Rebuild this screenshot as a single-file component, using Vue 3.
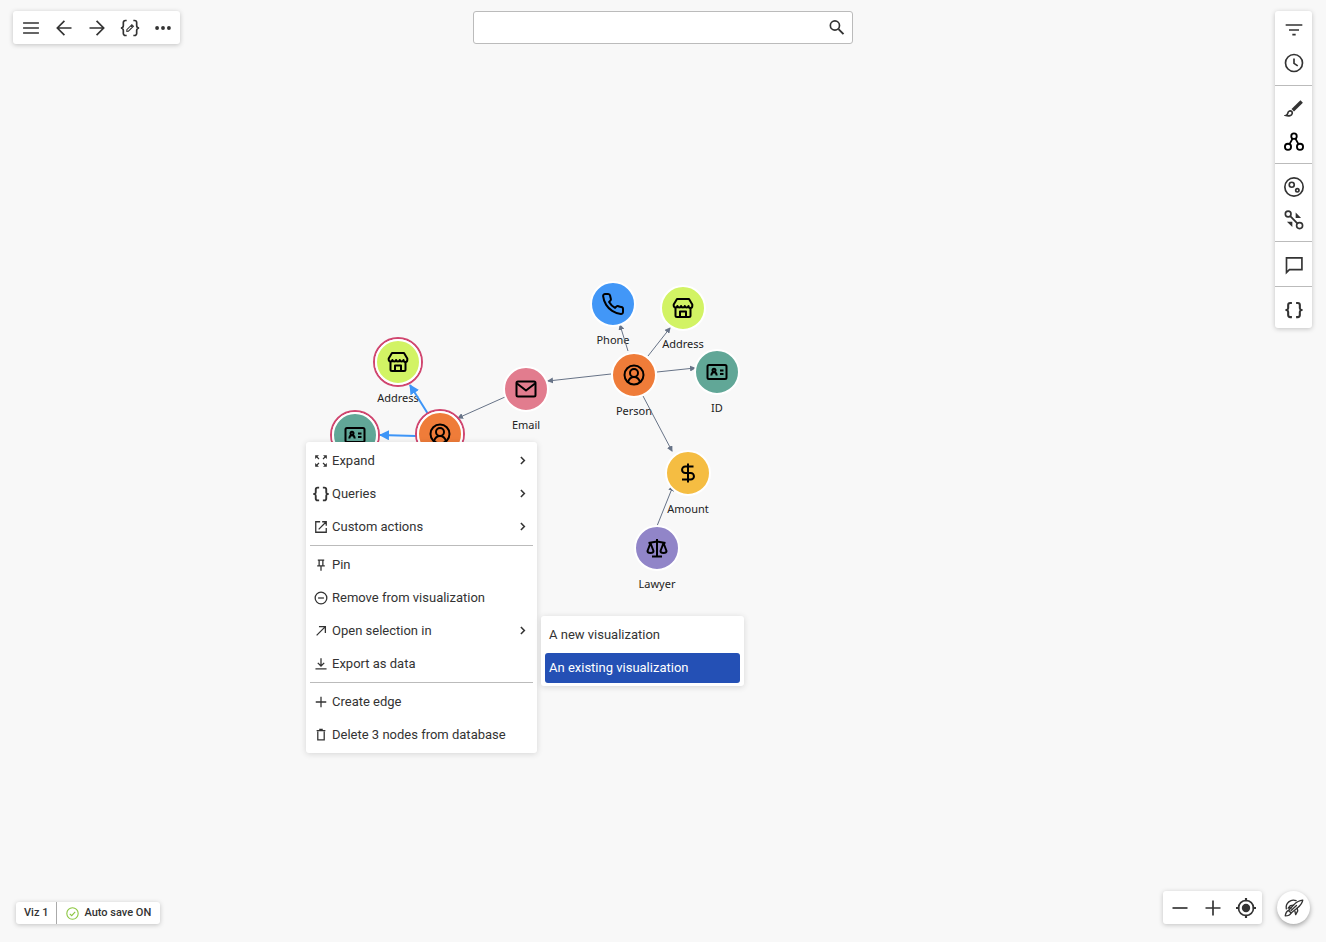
<template>
  <div class="app">
    <!-- icon sprite -->
    <svg class="sprite" aria-hidden="true">
      <symbol id="i-menu" viewBox="0 0 24 24"><path d="M2.500 6h19M2.500 12h19M2.500 18h19" /></symbol>
      <symbol id="i-back" viewBox="0 0 24 24"><path d="M21 12H4.500M12.500 3.500L4 12l8.500 8.500" /></symbol>
      <symbol id="i-forward" viewBox="0 0 24 24"><path d="M3 12h16.500M11.500 3.500L20 12l-8.500 8.500" /></symbol>
      <symbol id="i-query-edit" viewBox="0 0 24 24">
        <path d="M8 3H6.500a2.500 2.500 0 0 0-2.500 2.500v3.500A3 3 0 0 1 1 12a3 3 0 0 1 3 3v3.500A2.500 2.500 0 0 0 6.500 21H8M16 3h1.500a2.500 2.500 0 0 1 2.500 2.500v3.500A3 3 0 0 0 23 12a3 3 0 0 0-3 3v3.500a2.500 2.500 0 0 1-2.500 2.500H16" />
        <path stroke-width="1.300" d="M8.200 16v-2l6-6 1.900 1.900-6 6zM13 9.300l1.800 1.800" />
      </symbol>
      <symbol id="i-more" viewBox="0 0 24 24"><path fill="currentColor" stroke="none" d="M2.600 12a2.300 2.300 0 1 0 4.600 0 2.300 2.300 0 1 0-4.600 0M9.700 12a2.300 2.300 0 1 0 4.600 0 2.300 2.300 0 1 0-4.600 0M16.800 12a2.300 2.300 0 1 0 4.600 0 2.300 2.300 0 1 0-4.600 0" /></symbol>
      <symbol id="i-search" viewBox="0 0 24 24"><circle cx="9.500" cy="9" r="5.500" /><path stroke-width="2.400" d="M13.800 13.300l6 6" /></symbol>
      <symbol id="i-filter" viewBox="0 0 24 24"><path d="M2 6h20M6 12h12M10 17.500h4" /></symbol>
      <symbol id="i-clock" viewBox="0 0 24 24"><circle cx="12" cy="12" r="10.200" /><path d="M12 6.500v6l4.500 3" /></symbol>
      <symbol id="i-brush" viewBox="0 0 24 24">
        <path stroke-width="4.200" d="M10.500 13.500L21.200 3" />
        <path stroke-width="2" d="M8.500 14.500c-2-.6-3.700.6-3.900 2.400-.2 1.500-.8 2.400-2.300 2.900 3.600 1.100 6.900.1 7.500-2.300.3-1.300-.2-2.500-1.300-3z" />
      </symbol>
      <symbol id="i-nodes" viewBox="0 0 24 24">
        <g stroke="#000" stroke-width="2.200"><circle cx="12" cy="5" r="3.300" /><circle cx="4.800" cy="17.800" r="3.700" /><circle cx="19.200" cy="17.800" r="3.700" /><path d="M10.300 8l-3.700 6.500M13.700 8l3.700 6.500" /></g>
      </symbol>
      <symbol id="i-node-style" viewBox="0 0 24 24"><circle cx="12" cy="12" r="11" /><circle cx="9.300" cy="9.300" r="3" /><circle cx="16" cy="16" r="2" /></symbol>
      <symbol id="i-edge-style" viewBox="0 0 24 24">
        <circle cx="5" cy="4.800" r="3.400" /><circle cx="18.700" cy="18.700" r="3.600" /><path stroke-width="2.200" d="M7.500 7.300l8.500 8.700" />
        <path fill="currentColor" stroke="none" d="M14 3l6.500 6.500H14zM3.500 14H10v6.500z" />
      </symbol>
      <symbol id="i-comment" viewBox="0 0 24 24"><path d="M3 21V3.500h18.500v14H6.500z" /></symbol>
      <symbol id="i-braces" viewBox="0 0 24 24"><path stroke-width="2.500" d="M9.500 3.500H7.500A2.500 2.500 0 0 0 5 6v3.500A2.500 2.500 0 0 1 2 12a2.500 2.500 0 0 1 3 2.500V18a2.500 2.500 0 0 0 2.500 2.500h2M14.500 3.500h2A2.500 2.500 0 0 1 19 6v3.500A2.500 2.500 0 0 0 22 12a2.500 2.500 0 0 0-3 2.500V18a2.500 2.500 0 0 1-2.500 2.500h-2" /></symbol>
      <symbol id="i-minus" viewBox="0 0 24 24"><path d="M3 12h18" /></symbol>
      <symbol id="i-plus" viewBox="0 0 24 24"><path d="M3 12h18M12 3v18" /></symbol>
      <symbol id="i-target" viewBox="0 0 24 24"><circle cx="12" cy="12" r="9" /><circle cx="12" cy="12" r="5" fill="currentColor" stroke="none" /><path stroke-width="2.600" d="M12 0v4M12 20v4M0 12h4M20 12h4" /></symbol>
      <symbol id="i-rocket" viewBox="0 0 24 24">
        <g stroke-width="1.600" stroke-linejoin="round" stroke-linecap="round">
          <path d="M22.500 2.500c-4 .3-7 1.700-10.500 5.500L5.500 15l3 3 7.500-6c4-3.300 6-6 6.500-9.500z" />
          <path d="M11.500 8.500L7.500 9.300 5 12.200l3.500-.2M15.800 12.300l.7 3.200-2.500 4.500-1-4.500" />
          <path d="M5.500 15C3 15.800 2 18 1.500 21.500c3.500 0 5.800-1 7-3.500" />
          <path d="M2.800 13C1.500 6.500 8 .5 14.500 3.200" />
          <path d="M15 9l-6.500 6" />
        </g>
      </symbol>
      <symbol id="i-check" viewBox="0 0 24 24"><circle cx="12" cy="12" r="10.500" /><path d="M7 12.500l3.500 3.500 6.500-7" /></symbol>
      <symbol id="i-chevron" viewBox="0 0 24 24"><path stroke-width="3.400" d="M8.500 4.500L16 12l-7.500 7.500" /></symbol>

      <symbol id="i-expand" viewBox="0 0 24 24">
        <path fill="currentColor" stroke="none" d="M2 2h6.500L2 8.500zM22 2v6.500L15.500 2zM22 22h-6.500l6.500-6.500zM2 22v-6.500L8.500 22z" />
        <path d="M4 4l4.500 4.500M20 4l-4.500 4.500M20 20l-4.500-4.500M4 20l4.500-4.500" />
      </symbol>
      <symbol id="i-external" viewBox="0 0 24 24"><path d="M10.500 3H3v18h18v-7.500M14 3h7v7M21 3L8 16" /></symbol>
      <symbol id="i-pin" viewBox="0 0 24 24"><path d="M6.500 3.500h11M8.800 3.500V13M15.200 3.500V13M5.500 13.500h13M12 13.500v8.500" /></symbol>
      <symbol id="i-remove" viewBox="0 0 24 24"><circle cx="12" cy="12" r="10" /><path d="M7 12h10" /></symbol>
      <symbol id="i-open" viewBox="0 0 24 24"><path d="M4.500 19.500L19 5M8.500 4.500h11v11" /></symbol>
      <symbol id="i-export" viewBox="0 0 24 24"><path d="M12 2v13M6.500 10l5.500 5.500 5.500-5.500M2.500 20.500h19" /></symbol>
      <symbol id="i-trash" viewBox="0 0 24 24"><path d="M6.500 6v14.500h11V6M4.500 4.500h15M9 2.500h6" /></symbol>

      <symbol id="n-phone" viewBox="0 0 24 24"><path d="M22 16.920v3a2 2 0 0 1-2.180 2 19.800 19.800 0 0 1-8.630-3.070 19.500 19.500 0 0 1-6-6A19.800 19.800 0 0 1 2.120 4.180 2 2 0 0 1 4.110 2h3a2 2 0 0 1 2 1.720 12.800 12.800 0 0 0 .7 2.810 2 2 0 0 1-.45 2.110L8.090 9.910a16 16 0 0 0 6 6l1.270-1.270a2 2 0 0 1 2.110-.45 12.800 12.800 0 0 0 2.810.7A2 2 0 0 1 22 16.920z" /></symbol>
      <symbol id="n-store" viewBox="0 0 24 24">
        <path d="M6 3h12l3.300 5.500V10a1.900 1.900 0 0 1-3.800 0 1.900 1.900 0 0 1-3.700 0 1.900 1.900 0 0 1-3.700 0 1.900 1.900 0 0 1-3.700 0 1.900 1.900 0 0 1-3.700 0V8.500z" />
        <path d="M4.500 12v7.500a1.500 1.500 0 0 0 1.500 1.500h12a1.500 1.500 0 0 0 1.500-1.500V12M9 21v-5.500h6V21" />
      </symbol>
      <symbol id="n-person" viewBox="0 0 24 24"><circle cx="12" cy="12" r="9.500" /><circle cx="12" cy="10" r="4" /><path d="M6 19.300c.8-3.200 3-5.300 6-5.300s5.200 2.100 6 5.300" /></symbol>
      <symbol id="n-id" viewBox="0 0 24 24"><rect x="2.500" y="5" width="19" height="14" rx="1.500" /><circle cx="9" cy="10.300" r="1.500" /><path d="M6.300 15.500c.2-2 1.200-3.200 2.700-3.200s2.500 1.200 2.700 3.200M15 10.500h3.500M15 14h3.500" /></symbol>
      <symbol id="n-email" viewBox="0 0 24 24"><rect x="2.500" y="4.500" width="19" height="15" rx="1.500" /><path d="M3 6.500l9 7 9-7" /></symbol>
      <symbol id="n-amount" viewBox="0 0 24 24"><path d="M12 2.500v19M17.500 5.500H9.300a3.250 3.250 0 0 0 0 6.500h5.400a3.250 3.250 0 0 1 0 6.500H6" /></symbol>
      <symbol id="n-lawyer" viewBox="0 0 24 24"><path d="M12 3V20.500M7 20.500h10M3.500 7L12 5.500 20.500 7M5.500 7l-3 8a3 2 0 0 0 6 0zM18.500 7l-3 8a3 2 0 0 0 6 0z" /></symbol>
    </svg>

    <!-- graph -->
    <svg class="graph" role="img" aria-label="Graph visualization">
      <defs>
        <marker id="arrow" viewBox="0 0 6 6" refX="5" refY="3" markerWidth="6" markerHeight="6" markerUnits="userSpaceOnUse" orient="auto">
          <path d="M0 0L6 3L0 6z" fill="#677387" />
        </marker>
        <marker id="arrow-selected" viewBox="0 0 10 10" refX="9" refY="5" markerWidth="10" markerHeight="10" markerUnits="userSpaceOnUse" orient="auto">
          <path d="M0 0L10 5L0 10z" fill="#3d95f7" />
        </marker>
      </defs>
      <template v-for="node in nodes" :key="node.id">
        <text v-if="node.label" class="node-label" :x="node.x" :y="node.y + 40">{{ node.label }}</text>
      </template>
      <line
        v-for="(edge, i) in edges"
        :key="i"
        class="edge"
        :class="{ selected: edge.selected }"
        :x1="edge.x1"
        :y1="edge.y1"
        :x2="edge.x2"
        :y2="edge.y2"
        :marker-end="edge.selected ? 'url(#arrow-selected)' : 'url(#arrow)'"
      />
      <g v-for="node in nodes" :key="node.id">
        <circle v-if="node.selected" class="node-ring" :cx="node.x" :cy="node.y" r="24" />
        <circle class="node-dot" :cx="node.x" :cy="node.y" r="22" :fill="node.color" />
        <use class="node-icon" :href="'#n-' + node.icon" :x="node.x - 12" :y="node.y - 12" width="24" height="24" />
      </g>
    </svg>

    <!-- top -->
    <header class="top">
      <nav class="panel toolbar">
        <button v-for="b in mainTools" :key="b.icon" class="icon-btn" type="button" :aria-label="b.title">
          <svg class="icon"><use :href="'#i-' + b.icon" /></svg>
        </button>
      </nav>

      <form class="search" role="search" @submit.prevent>
        <input v-model="query" type="text" aria-label="Search" />
        <button class="search-btn" type="submit" aria-label="Search">
          <svg class="icon"><use href="#i-search" /></svg>
        </button>
      </form>

      <aside class="panel side">
        <div v-for="(group, i) in sideTools" :key="i" class="side-group">
          <button v-for="b in group" :key="b.icon" class="icon-btn" type="button" :aria-label="b.title">
            <svg class="icon"><use :href="'#i-' + b.icon" /></svg>
          </button>
        </div>
      </aside>
    </header>

    <!-- bottom -->
    <footer class="bottom">
      <div class="panel status">
        <span class="viz-name">Viz 1</span>
        <span class="auto-save">
          <svg class="icon check"><use href="#i-check" /></svg>
          Auto save ON
        </span>
      </div>
      <div class="bottom-right">
        <div class="panel toolbar">
          <button v-for="b in zoomTools" :key="b.icon" class="icon-btn" type="button" :aria-label="b.title">
            <svg class="icon"><use :href="'#i-' + b.icon" /></svg>
          </button>
        </div>
        <button class="rocket" type="button" aria-label="Getting started">
          <svg class="icon"><use href="#i-rocket" /></svg>
        </button>
      </div>
    </footer>

    <!-- context menu -->
    <div class="menu context" role="menu">
      <div v-for="(group, i) in menuGroups" :key="i" class="menu-group">
        <div v-for="item in group" :key="item.label" class="menu-row">
          <button class="menu-item" type="button" role="menuitem">
            <svg class="icon" :class="{ wide: item.icon === 'braces' }"><use :href="'#i-' + item.icon" /></svg>
            <span class="menu-text">{{ item.label }}</span>
            <svg v-if="item.more" class="icon chevron"><use href="#i-chevron" /></svg>
          </button>
          <div v-if="item.children" class="menu submenu" role="menu">
            <button
              v-for="child in item.children"
              :key="child"
              class="submenu-item"
              :class="{ active: child === activeChild }"
              type="button"
              role="menuitem"
              @mouseenter="activeChild = child"
            >{{ child }}</button>
          </div>
        </div>
      </div>
    </div>
  </div>
</template>

<script setup>
import { ref } from 'vue'

const query = ref('')
const activeChild = ref('An existing visualization')

const mainTools = [
  { icon: 'menu', title: 'Menu' },
  { icon: 'back', title: 'Undo' },
  { icon: 'forward', title: 'Redo' },
  { icon: 'query-edit', title: 'Edit query' },
  { icon: 'more', title: 'More' }
]

const sideTools = [
  [{ icon: 'filter', title: 'Filter' }, { icon: 'clock', title: 'Timeline' }],
  [{ icon: 'brush', title: 'Styles' }, { icon: 'nodes', title: 'Layout' }],
  [{ icon: 'node-style', title: 'Node grouping' }, { icon: 'edge-style', title: 'Edge grouping' }],
  [{ icon: 'comment', title: 'Comments' }],
  [{ icon: 'braces', title: 'Queries' }]
]

const zoomTools = [
  { icon: 'minus', title: 'Zoom out' },
  { icon: 'plus', title: 'Zoom in' },
  { icon: 'target', title: 'Center' }
]

const menuGroups = [
  [
    { icon: 'expand', label: 'Expand', more: true },
    { icon: 'braces', label: 'Queries', more: true },
    { icon: 'external', label: 'Custom actions', more: true }
  ],
  [
    { icon: 'pin', label: 'Pin' },
    { icon: 'remove', label: 'Remove from visualization' },
    {
      icon: 'open',
      label: 'Open selection in',
      more: true,
      children: ['A new visualization', 'An existing visualization']
    },
    { icon: 'export', label: 'Export as data' }
  ],
  [
    { icon: 'plus', label: 'Create edge' },
    { icon: 'trash', label: 'Delete 3 nodes from database' }
  ]
]

const nodes = [
  { id: 1, label: 'Phone', icon: 'phone', color: '#4297f7', x: 613, y: 304 },
  { id: 2, label: 'Address', icon: 'store', color: '#d2f364', x: 683, y: 308 },
  { id: 3, label: 'Person', icon: 'person', color: '#ef7c39', x: 634, y: 375 },
  { id: 4, label: 'ID', icon: 'id', color: '#61a797', x: 717, y: 372 },
  { id: 5, label: 'Email', icon: 'email', color: '#e27c8e', x: 526, y: 389 },
  { id: 6, label: 'Amount', icon: 'amount', color: '#f5bd42', x: 688, y: 473 },
  { id: 7, label: 'Lawyer', icon: 'lawyer', color: '#9185c8', x: 657, y: 548 },
  { id: 8, label: 'Address', icon: 'store', color: '#d2f364', x: 398, y: 362, selected: true },
  // labels of these two would sit under the open menu
  { id: 9, icon: 'id', color: '#61a797', x: 355, y: 435, selected: true },
  { id: 10, icon: 'person', color: '#ef7c39', x: 440, y: 434, selected: true }
]

const edges = [
  { x1: 628, y1: 351, x2: 620, y2: 325 },
  { x1: 648, y1: 356, x2: 670, y2: 328 },
  { x1: 657, y1: 372, x2: 695, y2: 368 },
  { x1: 611, y1: 374, x2: 548, y2: 381 },
  { x1: 643, y1: 396, x2: 672, y2: 451 },
  { x1: 657, y1: 526, x2: 673, y2: 486 },
  { x1: 505, y1: 397, x2: 458, y2: 418 },
  { x1: 428, y1: 414, x2: 410, y2: 385, selected: true },
  { x1: 416, y1: 436, x2: 380, y2: 435, selected: true }
]
</script>

<style>
body {
  background: #f8f8f8;
}
</style>

<style scoped>
.app {
  position: relative;
  min-height: 100vh;
  box-sizing: border-box;
  padding: 11px 14px 18px 13px;
  display: flex;
  flex-direction: column;
  justify-content: space-between;
  overflow: hidden;
  background: #f8f8f8;
  color: #333;
  font-family: Roboto, sans-serif;
  font-size: 13px;
}
.sprite {
  position: absolute;
  width: 0;
  height: 0;
}
button {
  padding: 0;
  border: 0;
  background: none;
  color: inherit;
  font: inherit;
  cursor: pointer;
}
.icon {
  display: block;
  width: 20px;
  height: 20px;
  fill: none;
  stroke: currentColor;
  stroke-width: 2;
}

/* graph */
.graph {
  position: absolute;
  inset: 0;
  width: 100%;
  height: 100%;
}
.edge {
  stroke: #677387;
  stroke-width: 1;
}
.edge.selected {
  stroke: #3d95f7;
  stroke-width: 2;
}
.node-dot {
  stroke: #fff;
  stroke-width: 2;
}
.node-ring {
  fill: #fff;
  stroke: #d0466f;
  stroke-width: 2;
}
.node-icon {
  fill: none;
  stroke: #000;
  stroke-width: 2;
  stroke-linejoin: round;
}
.node-label {
  fill: #222;
  font-family: "Noto Sans", sans-serif;
  font-size: 11px;
  text-anchor: middle;
}

/* panels */
.panel {
  background: #fff;
  border-radius: 3px;
  box-shadow: 0 1px 5px rgba(0, 0, 0, 0.22);
}
.icon-btn {
  width: 33px;
  height: 33px;
  display: flex;
  align-items: center;
  justify-content: center;
}
.toolbar {
  display: flex;
}
.top {
  position: relative;
  display: grid;
  grid-template-columns: 1fr minmax(0, 380px) 1fr;
  align-items: start;
}
.top .toolbar {
  justify-self: start;
  padding: 0 1px;
}
.search {
  display: flex;
  align-items: center;
  height: 33px;
  box-sizing: border-box;
  border: 1px solid #bbb;
  border-radius: 3px;
  background: #fff;
}
.search input {
  flex: 1;
  min-width: 0;
  padding: 0 8px;
  border: 0;
  outline: 0;
  background: none;
  font: inherit;
}
.search-btn {
  padding: 0 5px;
}
.side {
  justify-self: end;
  width: 37px;
  padding: 2px 0;
}
.side-group {
  display: flex;
  flex-direction: column;
  align-items: center;
  padding: 6px 0 5px;
  border-bottom: 1px solid #bbb;
}
.side-group:first-child {
  padding: 0 0 6px;
}
.side-group:last-child {
  padding-bottom: 0;
  border-bottom: 0;
}

/* bottom bar */
.bottom {
  position: relative;
  display: flex;
  align-items: flex-end;
  justify-content: space-between;
}
.status {
  display: flex;
  margin-left: 3px;
  height: 22px;
  line-height: 22px;
  font-size: 11px;
  font-weight: 500;
}
.viz-name {
  padding: 0 8px;
  border-right: 1px solid #aaa;
}
.auto-save {
  display: flex;
  align-items: center;
  gap: 5px;
  padding: 0 9px;
}
.icon.check {
  width: 13px;
  height: 13px;
  color: #8bc63f;
}
.bottom-right {
  display: flex;
  align-items: center;
  gap: 15px;
  margin-right: 2px;
}
.rocket {
  width: 33px;
  height: 33px;
  border-radius: 50%;
  background: #fff;
  box-shadow: 0 2px 5px rgba(0, 0, 0, 0.35);
  display: flex;
  align-items: center;
  justify-content: center;
}

/* menus */
.menu {
  position: absolute;
  box-sizing: border-box;
  background: #fff;
  border-radius: 3px;
  box-shadow: 0 1px 6px rgba(0, 0, 0, 0.14);
}
.context {
  left: 306px;
  top: 442px;
  min-width: 231px;
  padding: 2px 0;
}
.menu-group + .menu-group {
  border-top: 1px solid #bbb;
  margin-top: 2px;
  padding-top: 2px;
}
.menu-group {
  margin: 0 4px;
}
.menu-row {
  position: relative;
}
.menu-item {
  display: flex;
  align-items: center;
  width: 100%;
  height: 33px;
  padding: 0 5px 0 4px;
  text-align: left;
}
.menu-item .icon {
  width: 14px;
  height: 14px;
  stroke-width: 2.2;
}
.menu-item .icon.wide {
  width: 18px;
  height: 18px;
  margin: 0 -2px;
}
.menu-text {
  flex: 1;
  margin-left: 4px;
  white-space: nowrap;
}
.menu-item .icon.chevron {
  width: 11px;
  height: 11px;
}
.submenu {
  left: 100%;
  top: 2px;
  margin-left: 8px;
  width: 203px;
  padding: 4px 4px 3px;
  display: flex;
  flex-direction: column;
  gap: 3px;
}
.submenu-item {
  height: 30px;
  padding: 0 4px 2px;
  border-radius: 3px;
  text-align: left;
  white-space: nowrap;
}
.submenu-item.active {
  background: #2450b5;
  color: #fff;
}
</style>
